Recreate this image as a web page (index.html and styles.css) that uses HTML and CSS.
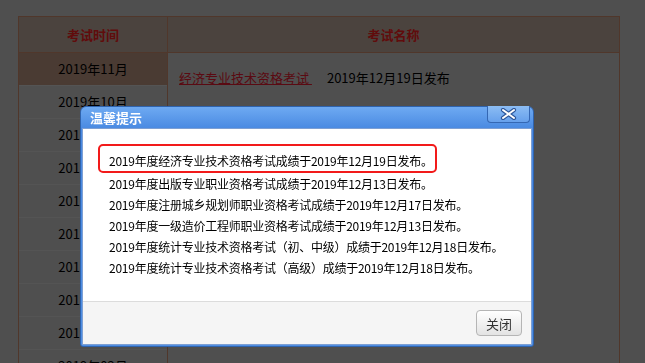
FILE: index.html
```html
<!DOCTYPE html>
<html lang="zh-CN">
<head>
    <meta charset="UTF-8">
    <meta name="viewport" content="width=device-width, initial-scale=1.0">
    <title>成绩查询</title>
    <link rel="stylesheet" href="styles.css">
</head>
<body>
    <div class="exam">
        <div class="exam-head">
            <div class="col-time">考试时间</div>
            <div class="col-name">考试名称</div>
        </div>
        <div class="exam-body">
            <ul class="months">
                <li class="on">2019年11月</li>
                <li>2019年10月</li>
                <li>2019年09月</li>
                <li>2019年08月</li>
                <li>2019年07月</li>
                <li>2019年06月</li>
                <li>2019年05月</li>
                <li>2019年04月</li>
                <li>2019年03月</li>
                <li>2019年02月</li>
            </ul>
            <div class="detail">
                <a href="#">经济专业技术资格考试&nbsp;</a><span>2019年12月19日发布</span>
            </div>
        </div>
    </div>

    <div class="mask"></div>
    <div class="dialog">
        <div class="dialog-title">温馨提示</div>
        <a class="dialog-x" href="#" title="关闭">
            <svg width="17" height="12" viewBox="0 0 17 12"><path d="M3 2L14 10M14 2L3 10" stroke="#2d5699" stroke-width="4.2" stroke-linecap="round"/><path d="M3 2L14 10M14 2L3 10" stroke="#fff" stroke-width="2" stroke-linecap="round"/></svg>
        </a>
        <div class="dialog-box">
            <div class="dialog-body">
                <p class="hl">2019年度经济专业技术资格考试成绩于2019年12月19日发布。</p>
                <p>2019年度出版专业职业资格考试成绩于2019年12月13日发布。</p>
                <p>2019年度注册城乡规划师职业资格考试成绩于2019年12月17日发布。</p>
                <p>2019年度一级造价工程师职业资格考试成绩于2019年12月13日发布。</p>
                <p>2019年度统计专业技术资格考试（初、中级）成绩于2019年12月18日发布。</p>
                <p>2019年度统计专业技术资格考试（高级）成绩于2019年12月18日发布。</p>
            </div>
            <div class="dialog-foot">
                <button class="btn-close">关闭</button>
            </div>
        </div>
    </div>
</body>
</html>
```
FILE: styles.css
```css
*{margin:0;padding:0;box-sizing:border-box}
html,body{height:100%;overflow:hidden}
body{background:#c6c6c6;color:#000;font-family:"Noto Sans CJK SC","Microsoft YaHei",sans-serif;font-size:13px;padding:16px 0 0 18px}
.exam{width:602px;border:1px solid #c98a6c}
.exam-head{display:grid;grid-template-columns:149px 1fr;height:36px;background:#bca89c;border-bottom:1px solid #c98a6c;font-weight:bold;color:#f02020}
.col-time,.col-name{display:flex;align-items:center;justify-content:center}
.col-time{border-right:1px solid #c98a6c}
.exam-body{display:grid;grid-template-columns:149px 1fr}
.months{list-style:none;border-right:1px solid #c98a6c}
.months li{height:33px;line-height:32px;text-align:center;border-bottom:1px solid #d2d2d2}
.months li.on{background:#b9937f}
.detail{padding:15px 0 0 11px;line-height:20px}
.detail a{color:#e0192f;text-decoration:underline}
.detail span{margin-left:15px}
.mask{position:fixed;top:0;left:0;right:0;bottom:0;background:rgba(0,0,0,.6)}
.dialog{position:fixed;left:80px;top:106px;width:454px;height:241px;border:1px solid #2f63ad;border-radius:6px 6px 3px 3px;background:linear-gradient(#6eaaf2,#4a8ae2 21px,#4f8fe4);padding:0 1px 1px}
.dialog-title{height:21px;line-height:21px;color:#fff;font-weight:bold;font-size:13px;padding-left:8px}
.dialog-x{position:absolute;right:3px;top:-1px;width:43px;height:17px;border:1px solid #3467b3;border-top:0;border-radius:0 0 4px 4px;background:linear-gradient(#8cbdf4,#66a0ec);display:flex;align-items:center;justify-content:center}
.dialog-box{background:#fff;border:1px solid #7d9fd3;height:217px}
.dialog-body{height:172px;padding:15px 0 0 26px;font-size:12px;white-space:nowrap;letter-spacing:-.25px}
.dialog-body p{height:21px;line-height:21px}
.dialog-body p.hl{width:339px;height:29px;margin-left:-11px;padding:4px 9px 0;border:2px solid #f21a1a;border-radius:5px}
.dialog-foot{height:43px;background:#f5f5f5;border-top:1px solid #dcdcdc;display:flex;justify-content:flex-end;align-items:flex-start;padding:8px 9px 0 0}
.btn-close{width:46px;height:26px;border:1px solid #b5b5b5;border-radius:4px;background:linear-gradient(#fff,#e3e3e3);font-family:"Noto Sans CJK SC",sans-serif;font-size:13px;color:#333;cursor:pointer}
```
